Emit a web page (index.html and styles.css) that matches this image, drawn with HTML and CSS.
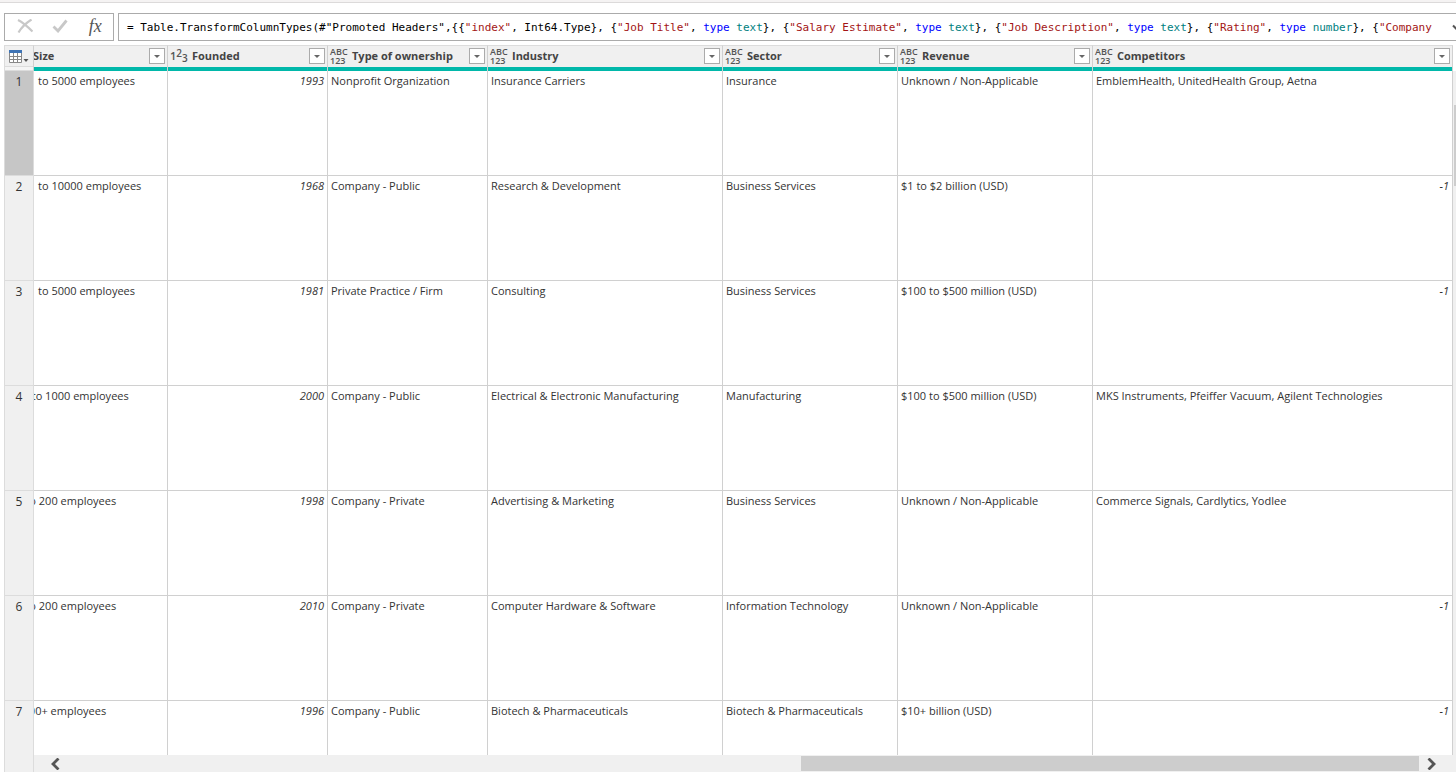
FILE: index.html
```html
<!DOCTYPE html>
<html lang="en">
<head>
<meta charset="utf-8">
<title>Query Editor</title>
<link rel="stylesheet" href="styles.css">
</head>
<body>
<div class="ribbon-edge"></div>
<div class="formula-bar">
  <div class="formula-actions">
    <button type="button" aria-label="Cancel"><svg width="16" height="14" viewBox="0 0 16 14"><path d="M1 1C5 3 11 8 15.500 12.500M14.500 .5C9 4 4 9 1.500 13.500" fill="none" stroke="#c8c8c8" stroke-width="2.200"/></svg></button>
    <button type="button" aria-label="Commit"><svg width="16" height="14" viewBox="0 0 16 14"><path d="M1.500 7.500L6 12L14.500 1.500" fill="none" stroke="#c8c8c8" stroke-width="2.800"/></svg></button>
    <button type="button" class="fx" aria-label="Add step">fx</button>
  </div>
  <div class="formula">
    <code>= Table.TransformColumnTypes(#"Promoted Headers",{{<i>"index"</i>, Int64.Type}, {<i>"Job Title"</i>, <b>type</b> <u>text</u>}, {<i>"Salary Estimate"</i>, <b>type</b> <u>text</u>}, {<i>"Job Description"</i>, <b>type</b> <u>text</u>}, {<i>"Rating"</i>, <b>type</b> <u>number</u>}, {<i>"Company</i></code>
    <button type="button" class="expand" aria-label="Expand formula"><svg width="10" height="8" viewBox="0 0 10 8"><path d="M1 1.500L5 5.500L9 1.500" fill="none" stroke="#555" stroke-width="2"/></svg></button>
  </div>
</div>
<main class="grid">
  <div class="viewport">
    <table>
      <colgroup><col class="c-index"><col class="c-size"><col class="c-160"><col class="c-160"><col class="c-industry"><col class="c-sector"><col class="c-revenue"><col></colgroup>
      <thead>
        <tr>
          <th class="corner"><button type="button" aria-label="Table menu"><svg width="20" height="13" viewBox="0 0 20 13"><path d="M.5.500h12v12H.5z" fill="#fff" stroke="#888"/><path d="M0 0h13v3H0z" fill="#3f74b5"/><path d="M0 6.500h13M0 9.500h13M4.500 3v9M8.500 3v9" stroke="#888" fill="none"/><path d="M14.500 9h5l-2.500 3z" fill="#555"/></svg></button><div class="corner-foot"></div></th>
          <th><div class="head"><span class="name scrolled">Size</span><button type="button" class="filter" aria-label="Filter Size"></button></div></th>
          <th><div class="head"><span class="type int">1<sup>2</sup><sub>3</sub></span><span class="name">Founded</span><button type="button" class="filter" aria-label="Filter Founded"></button></div></th>
          <th><div class="head"><span class="type">ABC<br>123</span><span class="name">Type of ownership</span><button type="button" class="filter" aria-label="Filter Type of ownership"></button></div></th>
          <th><div class="head"><span class="type">ABC<br>123</span><span class="name">Industry</span><button type="button" class="filter" aria-label="Filter Industry"></button></div></th>
          <th><div class="head"><span class="type">ABC<br>123</span><span class="name">Sector</span><button type="button" class="filter" aria-label="Filter Sector"></button></div></th>
          <th><div class="head"><span class="type">ABC<br>123</span><span class="name">Revenue</span><button type="button" class="filter" aria-label="Filter Revenue"></button></div></th>
          <th><div class="head"><span class="type">ABC<br>123</span><span class="name">Competitors</span><button type="button" class="filter" aria-label="Filter Competitors"></button></div></th>
        </tr>
      </thead>
      <tbody>
        <tr class="selected"><th>1</th><td><div class="clip"><span>1001 to 5000 employees</span></div></td><td class="num">1993</td><td>Nonprofit Organization</td><td>Insurance Carriers</td><td>Insurance</td><td>Unknown / Non-Applicable</td><td>EmblemHealth, UnitedHealth Group, Aetna</td></tr>
        <tr><th>2</th><td><div class="clip"><span>5001 to 10000 employees</span></div></td><td class="num">1968</td><td>Company - Public</td><td>Research &amp; Development</td><td>Business Services</td><td>$1 to $2 billion (USD)</td><td class="num">-1</td></tr>
        <tr><th>3</th><td><div class="clip"><span>1001 to 5000 employees</span></div></td><td class="num">1981</td><td>Private Practice / Firm</td><td>Consulting</td><td>Business Services</td><td>$100 to $500 million (USD)</td><td class="num">-1</td></tr>
        <tr><th>4</th><td><div class="clip"><span>501 to 1000 employees</span></div></td><td class="num">2000</td><td>Company - Public</td><td>Electrical &amp; Electronic Manufacturing</td><td>Manufacturing</td><td>$100 to $500 million (USD)</td><td>MKS Instruments, Pfeiffer Vacuum, Agilent Technologies</td></tr>
        <tr><th>5</th><td><div class="clip"><span>51 to 200 employees</span></div></td><td class="num">1998</td><td>Company - Private</td><td>Advertising &amp; Marketing</td><td>Business Services</td><td>Unknown / Non-Applicable</td><td>Commerce Signals, Cardlytics, Yodlee</td></tr>
        <tr><th>6</th><td><div class="clip"><span>51 to 200 employees</span></div></td><td class="num">2010</td><td>Company - Private</td><td>Computer Hardware &amp; Software</td><td>Information Technology</td><td>Unknown / Non-Applicable</td><td class="num">-1</td></tr>
        <tr><th>7</th><td><div class="clip"><span>10000+ employees</span></div></td><td class="num">1996</td><td>Company - Public</td><td>Biotech &amp; Pharmaceuticals</td><td>Biotech &amp; Pharmaceuticals</td><td>$10+ billion (USD)</td><td class="num">-1</td></tr>
      </tbody>
    </table>
    <div class="vscroll"><div class="vthumb"></div></div>
  </div>
  <div class="hscroll">
    <div class="hcorner"></div>
    <button type="button" aria-label="Scroll left"><svg width="10" height="12" viewBox="0 0 10 12"><path d="M8.500 .5L3 6L8.500 11.500" fill="none" stroke="#555" stroke-width="2.800"/></svg></button>
    <div class="track"><div class="hthumb"></div></div>
    <button type="button" class="right" aria-label="Scroll right"><svg width="10" height="12" viewBox="0 0 10 12"><path d="M1.500 .5L7 6L1.500 11.500" fill="none" stroke="#555" stroke-width="2.800"/></svg></button>
  </div>
</main>
</body>
</html>
```
FILE: styles.css
```css
* { box-sizing: border-box; }
body {
  margin: 0;
  height: 100vh;
  display: flex;
  flex-direction: column;
  overflow: hidden;
  background: #fff;
  color: #333;
  font: 11px/16px "Open Sans", "Noto Sans", sans-serif;
}
button {
  padding: 0;
  border: 0;
  background: none;
  font: inherit;
  color: inherit;
  display: flex;
  align-items: center;
  justify-content: center;
}
.ribbon-edge { height: 3px; flex: none; background: #f5f3f3; border-bottom: 1px solid #dcdada; }

.formula-bar { display: flex; gap: 4px; flex: none; height: 28px; margin: 10px 0 4px 4px; }
.formula-actions {
  display: flex;
  flex: none;
  width: 110px;
  padding-left: 2px;
  border: 1px solid #ababab;
}
.formula-actions button { flex: 1; }
.formula-actions svg { margin-bottom: 2px; }
.formula-actions .fx { font: italic 18px/24px "Liberation Serif", serif; color: #555; padding-bottom: 2px; }
.formula {
  flex: 1;
  min-width: 0;
  display: flex;
  align-items: center;
  justify-content: space-between;
  overflow: hidden;
  padding: 2px 0 0 8px;
  border: 1px solid #ababab;
  border-right: 0;
}
.formula code { font: 11px/16px "DejaVu Sans Mono", monospace; color: #000; white-space: pre; }
.formula i { font-style: normal; color: #a31515; }
.formula b { font-weight: normal; color: #00f; }
.formula u { text-decoration: none; color: #008080; }
.expand { flex: none; margin-right: -6px; }

.grid { flex: 1; min-height: 0; display: flex; flex-direction: column; margin: 0 0 4px 4px; }
.viewport { flex: 1; min-height: 0; display: flex; overflow: hidden; }
table { flex: 1; min-width: 0; table-layout: fixed; border-collapse: separate; border-spacing: 0; align-self: flex-start; }
.c-index { width: 30px; }
.c-size { width: 134px; }
.c-160 { width: 160px; }
.c-industry { width: 235px; }
.c-sector { width: 175px; }
.c-revenue { width: 195px; }
th, td { padding: 0; text-align: left; vertical-align: top; white-space: nowrap; overflow: hidden; }
thead th { height: 26px; background: #f0f0f0; border-top: 1px solid #dcdcdc; border-right: 1px solid #d0d0d0; }
.head {
  display: flex;
  align-items: center;
  height: 25px;
  padding: 0 2px 1px;
  border-bottom: 4px solid #01b8aa;
}
.type { flex: none; width: 22px; font: 600 9px/9px "Open Sans", sans-serif; color: #555; }
.int { font-size: 11px; line-height: 16px; }
.int sup, .int sub { font-size: 10px; line-height: 0; }
.int sup { vertical-align: 3px; }
.int sub { vertical-align: -2px; }
.name { flex: 1; font-weight: bold; color: #444; }
.scrolled { margin-left: -3px; }
.filter { flex: none; width: 16px; height: 16px; background: #fff; border: 1px solid #ababab; }
.filter::before { content: ""; border: 3px solid transparent; border-top-color: #666; border-bottom: 0; }
.corner { border-left: 1px solid #dcdcdc; }
.corner button { width: 100%; height: 20px; padding-top: 1px; }
.corner-foot { height: 5px; border: solid #dcdcdc; border-width: 1px 0; background: #f5f5f5; }

tbody th {
  height: 105px;
  padding-top: 3px;
  text-align: center;
  font-size: 12px;
  font-weight: normal;
  background: #f0f0f0;
  border: 1px solid #dcdcdc;
  border-top: 0;
}
.selected th { background: #c6c6c6; }
td { padding: 2px 3px; border-right: 1px solid #d0d0d0; border-bottom: 1px solid #d0d0d0; }
.num { text-align: right; font-style: italic; }
.clip { overflow: hidden; margin-left: -3px; }
.clip span { margin-left: -24px; }

.vscroll { flex: none; width: 3px; margin-top: 26px; padding: 34px 0 0 1px; background: #f0f0f0; }
.vthumb { height: 81px; background: #cdcdcd; }
.hscroll { display: flex; align-items: center; flex: none; height: 17px; background: #f0f0f0; }
.hcorner { width: 30px; align-self: stretch; border: solid #dcdcdc; border-width: 0 1px; }
.hscroll button { flex: none; width: 42px; height: 17px; }
.track { flex: 1; display: flex; justify-content: flex-end; }
.hthumb { width: 46%; height: 15px; background: #cdcdcd; }
.hscroll .right { width: 37px; padding-right: 12px; }
```
